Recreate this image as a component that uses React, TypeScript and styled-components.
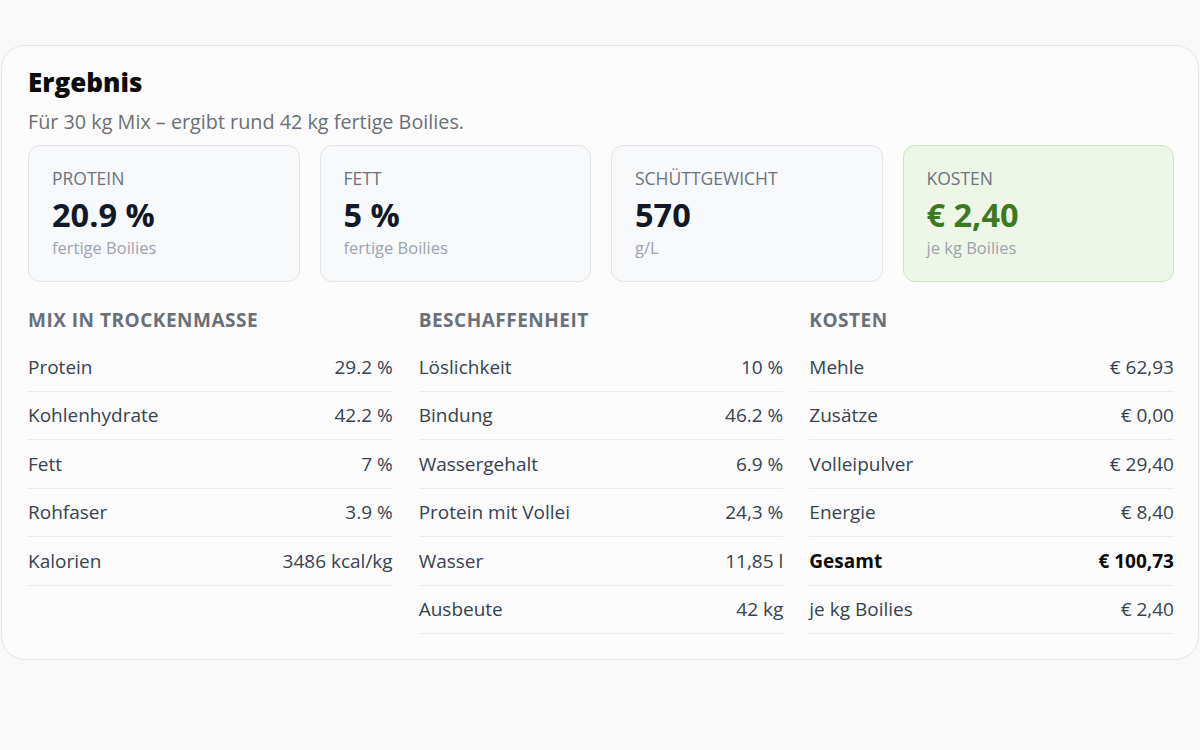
import React from "react";
import styled, { createGlobalStyle } from "styled-components";

const Global = createGlobalStyle`
  html, body { margin: 0; padding: 0; background: #f9f9f9; }
  body { font-family: "Open Sans", "Noto Sans", sans-serif; color: #374151; }
  * { box-sizing: border-box; }
`;

const Card = styled.section`
  margin: 45px 1px 0 1px;
  background: #fcfcfc;
  border: 1px solid #e6e6e6;
  border-radius: 24px;
  padding: 20px 24px 25px 26px;
`;

const Title = styled.h2`
  margin: 0;
  font-size: 26px;
  line-height: 32px;
  font-weight: 800;
  color: #0b0b0b;
`;

const Subtitle = styled.p`
  margin: 10px 0 9px;
  font-size: 19.8px;
  line-height: 28px;
  color: #6b6f76;
`;

const Stats = styled.div`
  display: grid;
  grid-template-columns: repeat(4, 1fr);
  gap: 20px;
`;

const Stat = styled.div<{ $accent?: boolean }>`
  height: 137px;
  border-radius: 12px;
  border: 1px solid ${(p) => (p.$accent ? "#cfe5bf" : "#e2e4e8")};
  background: ${(p) => (p.$accent ? "#eef7e7" : "#f8f9fb")};
  padding: 20px 23px;
  display: flex;
  flex-direction: column;
`;

const StatLabel = styled.div`
  font-size: 17.5px;
  line-height: 24px;
  text-transform: uppercase;
  color: #6b7280;
`;

const StatValue = styled.div<{ $accent?: boolean }>`
  font-size: 32.5px;
  line-height: 40px;
  font-weight: 700;
  color: ${(p) => (p.$accent ? "#3d7a1f" : "#111827")};
  margin-top: 5px;
`;

const StatSub = styled.div`
  font-size: 16.5px;
  line-height: 22px;
  color: #9ca3af;
  margin-top: 2px;
`;

const Sections = styled.div`
  display: grid;
  grid-template-columns: repeat(3, 1fr);
  gap: 26px;
  margin-top: 24px;
`;

const Section = styled.div`
  display: flex;
  flex-direction: column;
`;

const SectionTitle = styled.h3`
  margin: 0 0 9px;
  font-size: 19px;
  line-height: 28px;
  font-weight: 700;
  letter-spacing: 0.5px;
  text-transform: uppercase;
  color: #6b7078;
`;

const Row = styled.div<{ $strong?: boolean }>`
  display: flex;
  justify-content: space-between;
  align-items: center;
  height: 48.5px;
  border-bottom: 1px solid #ececec;
  font-size: 19px;
  color: ${(p) => (p.$strong ? "#0b0b0b" : "#374151")};
  font-weight: ${(p) => (p.$strong ? 700 : 400)};
`;

const stats = [
  { label: "Protein", value: "20.9 %", sub: "fertige Boilies" },
  { label: "Fett", value: "5 %", sub: "fertige Boilies" },
  { label: "Schüttgewicht", value: "570", sub: "g/L" },
  { label: "Kosten", value: "€ 2,40", sub: "je kg Boilies", accent: true },
];

const sections: { title: string; rows: [string, string, boolean?][] }[] = [
  {
    title: "Mix in Trockenmasse",
    rows: [
      ["Protein", "29.2 %"],
      ["Kohlenhydrate", "42.2 %"],
      ["Fett", "7 %"],
      ["Rohfaser", "3.9 %"],
      ["Kalorien", "3486 kcal/kg"],
    ],
  },
  {
    title: "Beschaffenheit",
    rows: [
      ["Löslichkeit", "10 %"],
      ["Bindung", "46.2 %"],
      ["Wassergehalt", "6.9 %"],
      ["Protein mit Vollei", "24,3 %"],
      ["Wasser", "11,85 l"],
      ["Ausbeute", "42 kg"],
    ],
  },
  {
    title: "Kosten",
    rows: [
      ["Mehle", "€ 62,93"],
      ["Zusätze", "€ 0,00"],
      ["Volleipulver", "€ 29,40"],
      ["Energie", "€ 8,40"],
      ["Gesamt", "€ 100,73", true],
      ["je kg Boilies", "€ 2,40"],
    ],
  },
];

export default function App() {
  return (
    <>
      <Global />
      <Card>
        <Title>Ergebnis</Title>
        <Subtitle>Für 30 kg Mix – ergibt rund 42 kg fertige Boilies.</Subtitle>
        <Stats>
          {stats.map((s) => (
            <Stat key={s.label} $accent={s.accent}>
              <StatLabel>{s.label}</StatLabel>
              <StatValue $accent={s.accent}>{s.value}</StatValue>
              <StatSub>{s.sub}</StatSub>
            </Stat>
          ))}
        </Stats>
        <Sections>
          {sections.map((sec) => (
            <Section key={sec.title}>
              <SectionTitle>{sec.title}</SectionTitle>
              {sec.rows.map(([k, v, strong]) => (
                <Row key={k} $strong={strong}>
                  <span>{k}</span>
                  <span>{v}</span>
                </Row>
              ))}
            </Section>
          ))}
        </Sections>
      </Card>
    </>
  );
}
